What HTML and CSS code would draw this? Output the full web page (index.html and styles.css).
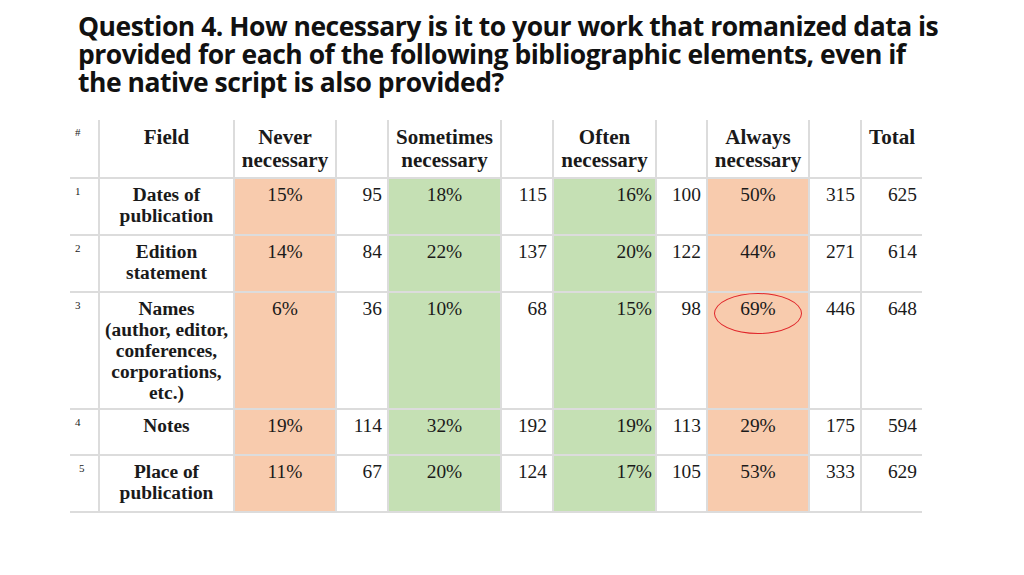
FILE: index.html
```html
<!DOCTYPE html>
<html>
<head>
<meta charset="utf-8">
<link rel="stylesheet" href="styles.css">
</head>
<body>
<div class="slide">
  <h1 class="title">Question 4. How necessary is it to your work that romanized data is provided for each of the following bibliographic elements, even if the native script is also provided?</h1>
  <div class="table-wrap">
    <table class="data">
      <colgroup>
        <col class="c-idx"><col class="c-field"><col class="c-never"><col class="c-n1"><col class="c-some"><col class="c-n2"><col class="c-often"><col class="c-n3"><col class="c-always"><col class="c-n4"><col class="c-total">
      </colgroup>
      <thead>
        <tr class="r-head">
          <th class="idx">#</th>
          <th>Field</th>
          <th>Never necessary</th>
          <th></th>
          <th>Sometimes necessary</th>
          <th></th>
          <th>Often necessary</th>
          <th></th>
          <th>Always necessary</th>
          <th></th>
          <th class="tot">Total</th>
        </tr>
      </thead>
      <tbody>
        <tr class="r-2l">
          <td class="idx">1</td><td class="field">Dates of publication</td>
          <td class="pct orange">15%</td><td class="num">95</td>
          <td class="pct green">18%</td><td class="num">115</td>
          <td class="pct green right">16%</td><td class="num">100</td>
          <td class="pct orange">50%</td><td class="num">315</td><td class="num">625</td>
        </tr>
        <tr class="r-2l">
          <td class="idx">2</td><td class="field">Edition statement</td>
          <td class="pct orange">14%</td><td class="num">84</td>
          <td class="pct green">22%</td><td class="num">137</td>
          <td class="pct green right">20%</td><td class="num">122</td>
          <td class="pct orange">44%</td><td class="num">271</td><td class="num">614</td>
        </tr>
        <tr class="r-5l">
          <td class="idx">3</td><td class="field">Names (author, editor, conferences, corporations, etc.)</td>
          <td class="pct orange">6%</td><td class="num">36</td>
          <td class="pct green">10%</td><td class="num">68</td>
          <td class="pct green right">15%</td><td class="num">98</td>
          <td class="pct orange circled"><span class="ring"></span>69%</td><td class="num">446</td><td class="num">648</td>
        </tr>
        <tr class="r-1l">
          <td class="idx">4</td><td class="field">Notes</td>
          <td class="pct orange">19%</td><td class="num">114</td>
          <td class="pct green">32%</td><td class="num">192</td>
          <td class="pct green right">19%</td><td class="num">113</td>
          <td class="pct orange">29%</td><td class="num">175</td><td class="num">594</td>
        </tr>
        <tr class="r-2l">
          <td class="idx i5">5</td><td class="field">Place of publication</td>
          <td class="pct orange">11%</td><td class="num">67</td>
          <td class="pct green">20%</td><td class="num">124</td>
          <td class="pct green right">17%</td><td class="num">105</td>
          <td class="pct orange">53%</td><td class="num">333</td><td class="num">629</td>
        </tr>
      </tbody>
    </table>
  </div>
</div>
</body>
</html>
```
FILE: styles.css
```css
* { box-sizing: border-box; }
html, body { margin: 0; padding: 0; background: #fff; }
body { width: 1024px; height: 575px; overflow: hidden; }

.slide {
  display: flex;
  flex-direction: column;
  padding: 12px 0 0 78px;
}

.title {
  margin: 0;
  width: 866px;
  font-family: "Open Sans", sans-serif;
  font-weight: 700;
  font-size: 26.5px;
  letter-spacing: -0.5px;
  line-height: 28px;
  color: #111;
}

.table-wrap {
  margin: 24px 0 0 -8px;
}

.data {
  border-collapse: collapse;
  table-layout: fixed;
  width: 852px;
  font-family: "Liberation Serif", "Times New Roman", serif;
  font-size: 19.4px;
  line-height: 21px;
  color: #1a1a1a;
}

.c-idx { width: 29px; }
.c-field { width: 135px; }
.c-never { width: 102px; }
.c-n1 { width: 52px; }
.c-some { width: 113px; }
.c-n2 { width: 52px; }
.c-often { width: 103px; }
.c-n3 { width: 51px; }
.c-always { width: 102px; }
.c-n4 { width: 52px; }
.c-total { width: 61px; }

.data th, .data td {
  padding: 5px 5px 0;
  vertical-align: top;
  border-left: 2px solid #dcdcdc;
  border-bottom: 2px solid #dcdcdc;
}
.data th:first-child, .data td:first-child { border-left: none; }

.data th {
  font-weight: 700;
  font-size: 21px;
  line-height: 23px;
  text-align: center;
  padding: 6px 2px 0;
}
.data th.tot { text-align: right; padding-right: 7px; }

.r-head { height: 58px; }
.r-2l { height: 57px; }
.r-5l { height: 117px; }
.r-1l { height: 46px; }

.data .idx {
  font-size: 11px;
  line-height: 14px;
  text-align: left;
  padding-left: 5px;
  font-weight: 400;
}
.data .i5 { padding-left: 9px; }
.data th.idx { padding-top: 5px; }

.field {
  font-weight: 700;
  text-align: center;
}

.pct { text-align: center; }
.pct.right { text-align: right; padding-right: 3px; }
.num { text-align: right; padding-right: 5px; }

.orange { background: #f8cbad; }
.green { background: #c5e0b4; }

.circled { position: relative; }
.ring {
  position: absolute;
  left: 6px;
  top: 0;
  width: 88px;
  height: 41px;
  border: 1.5px solid #e0252a;
  border-radius: 50%;
}
```
